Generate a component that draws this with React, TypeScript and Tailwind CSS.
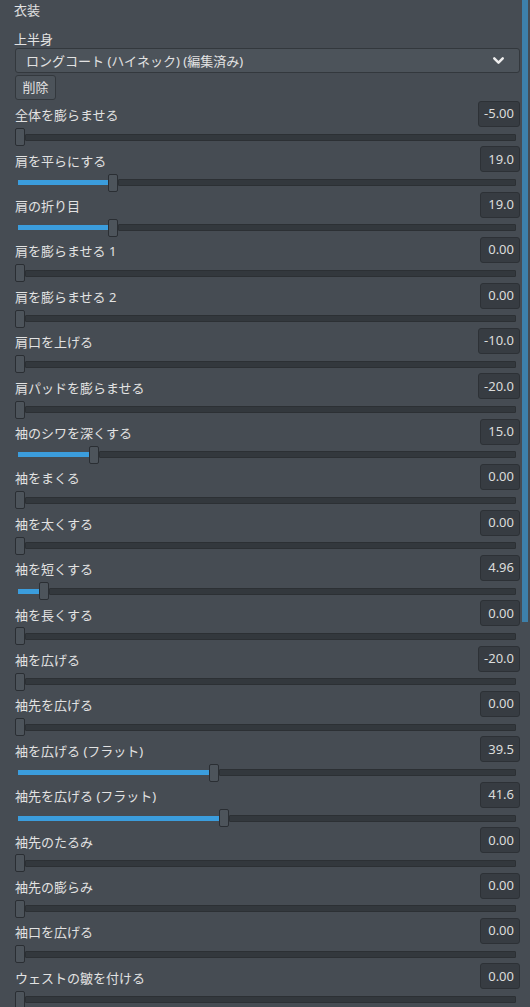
import { ChevronDown } from "lucide-react";

type SliderRow = {
  label: string;
  value: string;
};

const ROWS: SliderRow[] = [
  { label: "全体を膨らませる", value: "-5.00" },
  { label: "肩を平らにする", value: "19.0" },
  { label: "肩の折り目", value: "19.0" },
  { label: "肩を膨らませる 1", value: "0.00" },
  { label: "肩を膨らませる 2", value: "0.00" },
  { label: "肩口を上げる", value: "-10.0" },
  { label: "肩パッドを膨らませる", value: "-20.0" },
  { label: "袖のシワを深くする", value: "15.0" },
  { label: "袖をまくる", value: "0.00" },
  { label: "袖を太くする", value: "0.00" },
  { label: "袖を短くする", value: "4.96" },
  { label: "袖を長くする", value: "0.00" },
  { label: "袖を広げる", value: "-20.0" },
  { label: "袖先を広げる", value: "0.00" },
  { label: "袖を広げる (フラット)", value: "39.5" },
  { label: "袖先を広げる (フラット)", value: "41.6" },
  { label: "袖先のたるみ", value: "0.00" },
  { label: "袖先の膨らみ", value: "0.00" },
  { label: "袖口を広げる", value: "0.00" },
  { label: "ウェストの皺を付ける", value: "0.00" },
];

const FONT = { fontFamily: '"Noto Sans", "Noto Sans CJK JP", sans-serif' };

function Slider({ value }: { value: number }) {
  // track is 501px, thumb 10px; 0..100 maps onto 0..491
  const offset = Math.max(0, Math.min(491, value * 4.91));

  return (
    <div className="h-[19.4px] w-[501px] flex items-center pt-[1px]">
      {offset > 3 && (
        <div className="ml-[3px] h-[5px] shrink-0 bg-[#3b9ddd]" style={{ width: offset - 3 }} />
      )}
      <div className="h-[18px] w-[10px] shrink-0 bg-[#4d545b] border border-[#2a2e33] rounded-[2px]" />
      <div className="h-[7px] flex-1 bg-[#33383d] border border-[#2c3034] rounded-[1px]" />
    </div>
  );
}

export default function App() {
  return (
    <div className="min-h-screen bg-[#464c53] text-[#e2e2e2] text-[13px] flex" style={FONT}>
      <div className="w-[521px] pl-[15px] pr-[1px]">
        <div className="h-[20px] leading-[20px] -ml-[1px]">衣装</div>
        <div className="mt-[10px] h-[18px] leading-[18px] -ml-[1px]">上半身</div>

        <div className="h-[25px] flex items-center justify-between bg-[#4c535a] border border-[#33383d] rounded-[3px] pl-[10px] pr-[12px]">
          <span className="pt-[2px]">ロングコート (ハイネック) (編集済み)</span>
          <ChevronDown size={17} strokeWidth={3.5} className="text-[#eeeeee]" />
        </div>

        <button
          type="button"
          className="mt-[2px] h-[25px] w-[41px] bg-[#4c535a] border border-[#33383d] rounded-[3px] text-[#e2e2e2] flex items-center justify-center"
        >
          削除
        </button>

        <div className="mt-[1px]">
          {ROWS.map((row) => (
            <div key={row.label}>
              <div className="h-[26px] flex items-center justify-between">
                <span className="pt-[4px]">{row.label}</span>
                <div className="h-[26px] min-w-[40px] px-[5px] flex items-center justify-end bg-[#373c42] border border-[#2d3136] rounded-[3px] text-[#dcdcdc]">
                  {row.value}
                </div>
              </div>
              <Slider value={parseFloat(row.value)} />
            </div>
          ))}
        </div>
      </div>

      <div className="w-[9px] pl-[1px]">
        <div className="h-[622px] w-[6px] bg-[#3d80aa]" />
      </div>
    </div>
  );
}
